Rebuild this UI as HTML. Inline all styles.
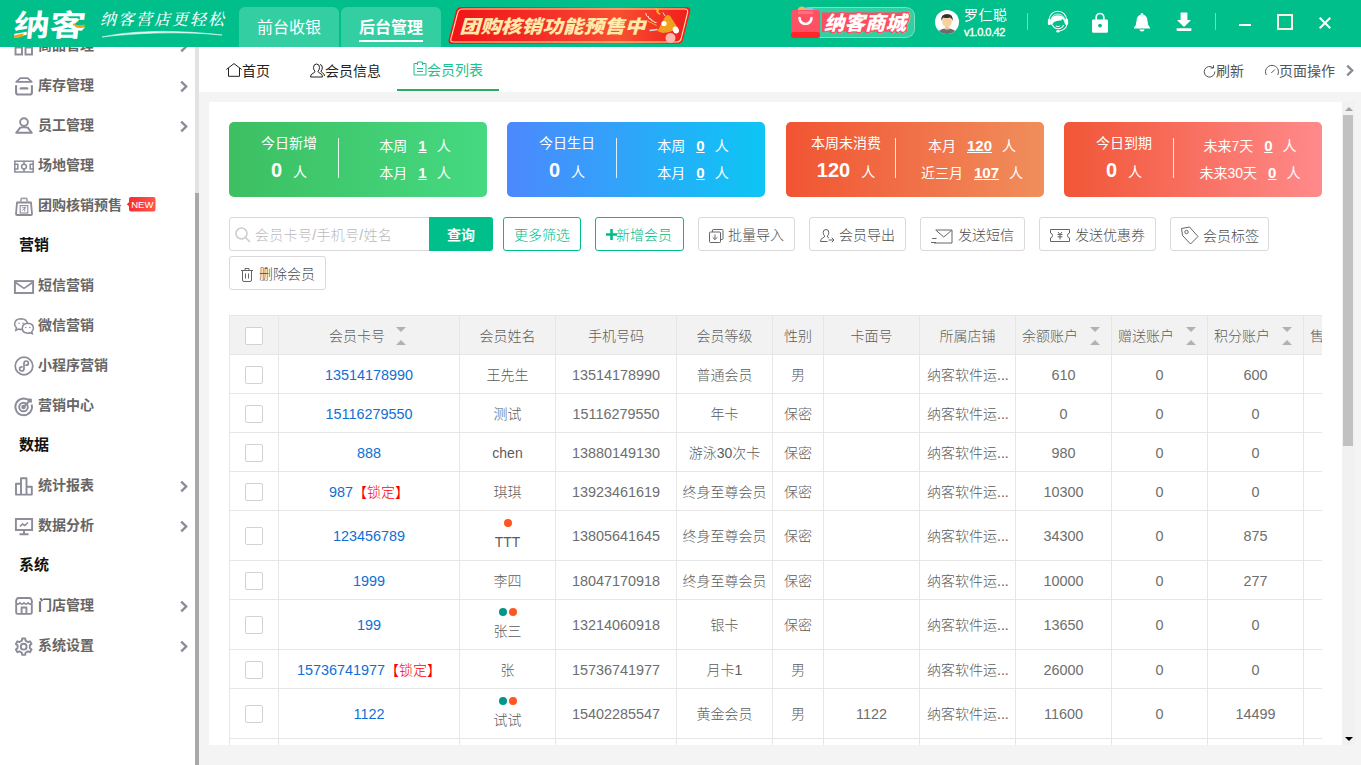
<!DOCTYPE html>
<html lang="zh-CN">
<head>
<meta charset="utf-8">
<title>会员列表</title>
<style>
*{box-sizing:border-box;margin:0;padding:0}
html,body{width:1361px;height:765px;overflow:hidden;background:#f4f4f4}
body{font-family:"Liberation Sans","Noto Sans CJK SC",sans-serif;font-size:14px;color:#5c5c5c;position:relative;font-weight:300}
.abs{position:absolute}
svg{display:block;overflow:visible}
/* top bar */
#top{position:absolute;left:0;top:0;width:1361px;height:47px;background:#00bf8a;z-index:5;font-weight:400}
.ntab{position:absolute;top:7px;height:40px;width:100px;background:#33cfa3;border-radius:6px 6px 0 0;color:#fff;font-size:16px;text-align:center;line-height:42px}
/* sidebar */
#side{position:absolute;left:0;top:46px;width:195px;height:719px;background:#fff;overflow:hidden}
.mi{position:absolute;left:0;width:195px;height:40px}
.mi .t{position:absolute;left:38px;top:0;line-height:40px;font-size:14px;font-weight:700;color:#666;white-space:nowrap}
.mi .ic{position:absolute;left:14px;top:11px;width:20px;height:20px}
.mi .ch{position:absolute;left:180px;top:15.5px;width:8px;height:11px}
.sec{position:absolute;left:19px;font-size:15px;font-weight:700;color:#111;line-height:40px;height:40px}
/* page tabs */
#ptabs{position:absolute;left:199px;top:46px;width:1162px;height:46px;background:#fff}
.pt{position:absolute;top:0;height:46px;line-height:50px;font-size:14px;color:#222;font-weight:400;white-space:nowrap}
/* main card */
#card{position:absolute;left:209px;top:102px;width:1133px;height:643px;background:#fff;overflow:hidden}
.stat{position:absolute;top:20px;width:258px;height:75px;border-radius:5px;color:#fff;font-weight:400}
.stat .l{position:absolute;left:10px;width:100px;text-align:center;white-space:nowrap}
.stat .dv{position:absolute;left:109px;top:16px;width:1px;height:40px;background:rgba(255,255,255,.85)}
.stat .r{position:absolute;left:110px;width:152px;text-align:center;white-space:nowrap;font-size:14px}
.stat b.n{font-size:15px;font-weight:700;text-decoration:underline;margin:0 10px 0 11px}
.stat .big{font-size:20px;font-weight:700;margin-right:11px}
.btn{position:absolute;top:115px;height:34px;border:1px solid #d9d9d9;border-radius:3px;background:#fff;color:#4d4d4d;font-size:14px;line-height:35px;white-space:nowrap}
.btn.g{border-color:#00bf8a;color:#00b985}
.btn .tx{position:absolute;top:0}
/* table */
#tbl{position:absolute;left:20px;top:213px;width:1093px;height:430px;overflow:hidden;border-left:1px solid #e6e6e6;border-top:1px solid #e6e6e6}
.row{position:absolute;left:0;width:1200px;border-bottom:1px solid #e6e6e6}
.c{position:absolute;top:0;height:100%;border-right:1px solid #e6e6e6;text-align:center;white-space:nowrap;overflow:hidden}
.hd{background:#f2f2f2}
.cb{position:absolute;left:15px;width:18px;height:18px;border:1px solid #d2d2d2;border-radius:2px;background:#fff}
a.lk{color:#0f6fd6;text-decoration:none;font-size:14.4px}
.nm{font-size:14.4px;color:#6e6e6e}
.lock{color:#f00;font-size:14px}
.dot{display:inline-block;width:8px;height:8px;border-radius:50%;margin:0 1px;vertical-align:top}
</style>
</head>
<body>
<div id="top"><!-- logo -->
<div class="abs" style="left:14px;top:3px;width:80px;height:40px;font-family:'Noto Sans CJK SC',sans-serif;font-weight:700;font-size:30px;line-height:40px;color:#fff;white-space:nowrap;transform-origin:0 50%;transform:scaleX(1.2) skewX(-5deg);letter-spacing:0">纳客</div>
<svg class="abs" style="left:0;top:0" width="100" height="46" viewBox="0 0 100 46"><path d="M14 35.500 q5 -1.500 10 -2 l-1.500 3 q-5 2 -8.500 1.500z" fill="#f5a01d"/><path d="M73 23 q4 3.500 12 1.500 l-1 3 q-6 1.500 -9 -1z" fill="#f5a01d"/></svg>
<div class="abs" style="left:100px;top:8px;width:130px;height:22px;font-family:'Noto Serif CJK SC',serif;font-style:italic;font-weight:500;font-size:16px;line-height:22px;color:#fff;letter-spacing:2px;white-space:nowrap">纳客营店更轻松</div>
<svg class="abs" style="left:100px;top:30px" width="125" height="8" viewBox="0 0 125 8"><path d="M2 7 C 30 1, 70 -1, 122 5 C 80 1, 35 3, 2 7z" fill="#fff" stroke="#fff" stroke-width=".6" opacity=".9"/></svg>
<!-- nav tabs -->
<div class="ntab" style="left:239px">前台收银</div>
<div class="ntab" style="left:341px;font-weight:700">后台管理</div>
<div class="abs" style="left:359px;top:40px;width:64px;height:2px;background:#fff"></div>
<!-- banner -->
<svg class="abs" style="left:446px;top:5px" width="248" height="41" viewBox="0 0 248 41">
<defs><linearGradient id="bg1" x1="0" x2="1" y1="0" y2="0"><stop offset="0" stop-color="#f01416"/><stop offset=".45" stop-color="#f5332a"/><stop offset=".7" stop-color="#f8502f"/><stop offset="1" stop-color="#f01c1c"/></linearGradient></defs>
<path d="M16 2 H240 Q245.500 2 244 7 L237 35 Q236 39 231 39 H6 Q1.500 39 2.800 34 L10 6 Q11 2 16 2Z" fill="url(#bg1)"/>
<path d="M17 4 H238.500 Q242.500 4 241.500 8 L235.200 33.500 Q234.300 37 230 37 H7.500 Q4 37 5 33.500 L11.800 7.500 Q12.700 4 17 4Z" fill="none" stroke="#ffe3a6" stroke-width="1.100"/>
<text x="13.500" y="27.800" font-family="'Noto Sans CJK SC',sans-serif" font-weight="900" font-style="italic" font-size="18.300" fill="#ffeaa9" textLength="186" lengthAdjust="spacingAndGlyphs">团购核销功能预售中</text>
<!-- megaphone -->
<g>
<circle cx="224.500" cy="33" r="5" fill="#f9b8b2"/>
<path d="M211.500 26 L219 12 Q221.500 8.500 224.500 11.500 L231.500 22.500 Q226 27.500 216.500 28Z" fill="#f0a01c"/>
<ellipse cx="229.800" cy="25" rx="3" ry="3.600" fill="#fff" transform="rotate(-25 229.800 25)"/>
<circle cx="218" cy="18.500" r="2.600" fill="#fff"/>
<path d="M200 8 q0 4 2.500 3.500 q-.5 3 2.500 2.500 q0 2.500 2.500 2 q.5 2 3 1.500" stroke="#fff" stroke-width="1" fill="none" opacity=".9"/>
<path d="M209.500 3.500 l2.500 2.300 l-1 1 l3 2.500" stroke="#ffc61a" stroke-width="1.500" fill="none"/>
<path d="M201.600 16 L210.800 20.500" stroke="#f6b01e" stroke-width="1"/>
<path d="M203.600 25.400 L211.500 24.400" stroke="#cfe3ee" stroke-width="1.500"/>
<path d="M217 7.500 l2 3.500" stroke="#cfe3ee" stroke-width="1"/>
</g>
</svg>
<!-- mall badge -->
<div class="abs" style="left:800px;top:7px;width:115px;height:31px;background:#33cfa3;border:1px solid rgba(255,255,255,.35);border-radius:9px"></div>
<svg class="abs" style="left:789px;top:5px" width="130" height="36" viewBox="0 0 130 36">
<circle cx="13" cy="6" r="4.500" fill="#f6b36b"/><circle cx="20" cy="7.500" r="5.500" fill="#8fc3ea"/>
<rect x="2" y="5" width="29" height="28" rx="3" fill="#ff5163"/>
<rect x="2" y="27" width="29" height="6" rx="2.500" fill="#ff2727"/>
<path d="M9 6 H24 V9 H9z" fill="#ff8a8a" opacity=".6"/>
<path d="M10.500 13 a6 6 0 0 0 12 0" fill="none" stroke="#fff" stroke-width="2.600" stroke-linecap="round"/>
<rect x="33" y="7.500" width="85" height="19" fill="#ff4d60"/><text x="35" y="25" font-family="'Noto Sans CJK SC',sans-serif" font-weight="900" font-style="italic" font-size="19.500" fill="#fff" stroke="#ff4d60" stroke-width="2.500" stroke-linejoin="round" paint-order="stroke" textLength="82" lengthAdjust="spacingAndGlyphs">纳客商城</text>
</svg>
<!-- avatar -->
<svg class="abs" style="left:935px;top:10px" width="24" height="24" viewBox="0 0 24 24">
<defs><clipPath id="avc"><circle cx="12" cy="12" r="12"/></clipPath></defs>
<circle cx="12" cy="12" r="12" fill="#fff"/>
<g clip-path="url(#avc)">
<path d="M2 26 Q2 18.500 12 18.500 Q22 18.500 22 26Z" fill="#6d6d6d"/>
<rect x="10" y="14" width="4" height="5.500" fill="#f3c58f"/>
<ellipse cx="12" cy="11.500" rx="4.800" ry="5.600" fill="#f8d1a0"/>
<path d="M6.400 11 Q5.500 4 12 4 Q18.500 4 17.600 11 Q17 8 15 7.500 Q11 8.500 8.500 7.500 Q7 8.500 6.400 11Z" fill="#333"/>
</g>
</svg>
<div class="abs" style="left:964px;top:6px;font-size:14px;line-height:18px;color:#fff;white-space:nowrap;letter-spacing:.5px">罗仁聪</div>
<div class="abs" style="left:964px;top:25px;font-size:11px;line-height:14px;color:#fff;white-space:nowrap;letter-spacing:-.5px;font-weight:400;-webkit-text-stroke:.35px #fff">v1.0.0.42</div>
<div class="abs" style="left:1027px;top:13px;width:1px;height:17px;background:rgba(255,255,255,.45)"></div>
<!-- headset -->
<svg class="abs" style="left:1047px;top:10px" width="22" height="23" viewBox="0 0 22 23">
<path d="M2.300 9.800 A8.600 8.600 0 0 1 19.500 9.800" fill="none" stroke="#fff" stroke-width="1.100"/>
<path d="M4 9.800 A7 7 0 0 1 17.800 9.800" fill="none" stroke="#fff" stroke-width=".9" opacity=".9"/>
<rect x=".9" y="8.800" width="3" height="6.200" rx="1.300" fill="#fff"/><rect x="18.100" y="8.800" width="3" height="6.200" rx="1.300" fill="#fff"/>
<path d="M4.400 12.600 Q4.400 5.800 10.900 5.800 Q17.400 5.800 17.400 12.600 Q17.400 13.200 17.200 14 Q16.600 10.800 15 9 Q14.200 9.400 13.800 10.600 Q10 10.300 7.600 12 Q6 13.300 5.800 15.200 Q4.400 14.200 4.400 12.600Z" fill="#fff" transform="translate(10.900 11.500) scale(1.130 1.100) translate(-10.900 -11.500)"/>
<path d="M5.300 14.800 Q7.300 18.800 11 18.800 Q14.700 18.800 16.700 15" fill="none" stroke="#fff" stroke-width="1.100"/>
<path d="M8.900 16 Q10.900 17.400 12.900 16" fill="none" stroke="#fff" stroke-width="1"/>
<path d="M19.800 14.500 Q19.300 19.600 12.300 21" fill="none" stroke="#fff" stroke-width="1.100"/>
<ellipse cx="10.900" cy="21.300" rx="1.700" ry="1.200" fill="#fff"/>
</svg>
<!-- lock -->
<svg class="abs" style="left:1092px;top:12px" width="16" height="21" viewBox="0 0 16 21">
<path d="M4.200 8 V5.300 a3.800 3.800 0 0 1 7.600 0 V8" fill="none" stroke="#fff" stroke-width="1.700"/>
<rect x="0" y="7.400" width="16" height="13.300" rx="1.300" fill="#fff"/>
<circle cx="8" cy="13.600" r="1.900" fill="#00bd88"/>
</svg>
<!-- bell -->
<svg class="abs" style="left:1134px;top:12.500px" width="16" height="19" viewBox="0 0 16 19">
<path d="M8 0 a1.300 1.300 0 0 1 1.300 1.500 Q13.300 2.800 13.500 8 Q13.600 12.500 16 14.500 V15.500 H0 V14.500 Q2.400 12.500 2.500 8 Q2.700 2.800 6.700 1.500 A1.300 1.300 0 0 1 8 0Z" fill="#fff"/>
<path d="M5.500 16.600 h5 a2.500 2 0 0 1 -5 0z" fill="#fff"/>
</svg>
<!-- download -->
<svg class="abs" style="left:1176px;top:12px" width="16" height="19" viewBox="0 0 16 19">
<path d="M4.600 0.500 H11.400 V8 H15 L8 15 L1 8 H4.600Z" fill="#fff"/>
<rect x=".5" y="16.300" width="15" height="2.600" rx=".8" fill="#fff"/>
</svg>
<div class="abs" style="left:1215px;top:13px;width:1px;height:17px;background:rgba(255,255,255,.45)"></div>
<!-- window controls -->
<div class="abs" style="left:1239px;top:24px;width:12px;height:2px;background:#fff"></div>
<div class="abs" style="left:1277px;top:14px;width:16px;height:16px;border:2px solid #fbeee1"></div>
<svg class="abs" style="left:1319px;top:17px" width="12" height="12" viewBox="0 0 12 12"><path d="M.7 .7 L11.300 11.300 M11.300 .7 L.7 11.300" stroke="#fff" stroke-width="2"/></svg>
</div>
<div id="side"><!-- y offsets relative to sidebar top (46). item center y(abs)=45 -> top = 45-20-46=-21 -->
<div class="mi" style="top:-21px"><svg class="ic" viewBox="0 0 20 20"><g fill="none" stroke="#8b8b99" stroke-width="1.900"><rect x="1.500" y="1.500" width="6.500" height="6.500"/><rect x="11.500" y="1.500" width="6.500" height="6.500"/><rect x="1.500" y="11.500" width="6.500" height="7"/><rect x="11.500" y="11.500" width="6.500" height="7"/></g></svg><span class="t">商品管理</span><svg class="ch" viewBox="0 0 8 11"><path d="M1.200 .6 L6.200 5.500 L1.200 10.400" fill="none" stroke="#8b8b99" stroke-width="2.400"/></svg></div>
<div class="mi" style="top:19px"><svg class="ic" viewBox="0 0 20 20"><g fill="none" stroke="#8b8b99" stroke-width="2"><path d="M2.100 9.200 V16.400 Q2.100 18.500 4.200 18.500 H15.800 Q17.900 18.500 17.900 16.400 V9.200" stroke-width="2.100"/><path d="M2.300 5.900 L6.300 2.100 H13.700 L17.700 5.900Z" stroke-width="1.900" stroke-linejoin="round"/><path d="M6.800 12.400 H13.200" stroke-width="2.400" stroke-linecap="round"/></g></svg><span class="t">库存管理</span><svg class="ch" viewBox="0 0 8 11"><path d="M1.200 .6 L6.200 5.500 L1.200 10.400" fill="none" stroke="#8b8b99" stroke-width="2.400"/></svg></div>
<div class="mi" style="top:59px"><svg class="ic" viewBox="0 0 20 20"><g fill="none" stroke="#8b8b99" stroke-width="1.900"><circle cx="10" cy="6.100" r="3.900"/><path d="M2.200 16.800 L6.200 11.700 Q10 10.700 13.800 11.700 L17.800 16.800Z" stroke-linejoin="round"/></g></svg><span class="t">员工管理</span><svg class="ch" viewBox="0 0 8 11"><path d="M1.200 .6 L6.200 5.500 L1.200 10.400" fill="none" stroke="#8b8b99" stroke-width="2.400"/></svg></div>
<div class="mi" style="top:99px"><svg class="ic" viewBox="0 0 20 20"><g fill="none" stroke="#8b8b99" stroke-width="1.500"><rect x=".8" y="5.200" width="18.400" height="10.800"/><circle cx="10" cy="10.600" r="2.400"/><path d="M10 5.200 V8.200 M10 13 V16 M.8 8.300 H3.800 V12.900 H.8 M19.200 8.300 H16.200 V12.900 H19.200"/></g></svg><span class="t">场地管理</span></div>
<div class="mi" style="top:139px"><svg class="ic" viewBox="0 0 20 20"><g fill="none" stroke="#8b8b99" stroke-width="1.800"><path d="M3 6.500 H17 L18 18 Q18 19 17 19 H3 Q2 19 2 18Z" stroke-linejoin="round"/><path d="M6.300 6.500 L7.500 2.300 H12.500 L13.700 6.500" stroke="#a5a5b0" stroke-linejoin="round"/><rect x="6.200" y="9.600" width="7.600" height="7.400" stroke-width="1.100"/><path d="M8 11.800 H12.200 M10.700 10.800 V15.500 M8.300 14.700 L10.500 12.500" stroke-width=".9"/></g></svg><span class="t">团购核销预售</span>
<svg class="abs" style="left:126px;top:12px" width="30" height="15" viewBox="0 0 30 15"><defs><linearGradient id="ng" x1="0" x2="1"><stop offset="0" stop-color="#f52a2e"/><stop offset="1" stop-color="#ff5748"/></linearGradient></defs><path d="M0.800 7.300 L3 5.300 V2 Q3 0 5 0 H27.500 Q29.500 0 29.500 2 V12.500 Q29.500 14.500 27.500 14.500 H5 Q3 14.500 3 12.500 V9.300Z" fill="url(#ng)"/><text x="16.300" y="11" text-anchor="middle" font-family="'Liberation Sans',sans-serif" font-size="9.500" fill="#fff">NEW</text></svg></div>
<div class="sec" style="top:179px">营销</div>
<div class="mi" style="top:219px"><svg class="ic" viewBox="0 0 20 20"><g fill="none" stroke="#8b8b99" stroke-width="1.900"><rect x=".9" y="5.100" width="18.200" height="11.900"/><path d="M1.500 6.500 L10 12.300 L18.500 6.500" stroke-width="1.600"/></g></svg><span class="t">短信营销</span></div>
<div class="mi" style="top:259px"><svg class="ic" viewBox="0 0 20 20"><g fill="#fff" stroke="#8b8b99" stroke-width="1.500"><path d="M7 2.800 Q13 3 13.500 8 Q12.500 13.300 7 13.500 Q5.500 13.500 4.300 13 L1.800 14.300 L2.400 11.800 Q.6 10.200 .6 8 Q1 3 7 2.800Z"/><path d="M13.800 7.300 Q19.400 7.600 19.400 12.300 Q19.400 14.400 17.700 15.800 L18.300 17.600 L16.200 16.700 Q15 17.200 13.800 17.200 Q8.300 17 8.300 12.300 Q8.500 7.600 13.800 7.300Z"/></g><g fill="#8b8b99"><circle cx="5" cy="7.300" r=".75"/><circle cx="9" cy="7.300" r=".75"/><circle cx="11.800" cy="11.500" r=".75"/><circle cx="15.800" cy="11.500" r=".75"/></g></svg><span class="t">微信营销</span></div>
<div class="mi" style="top:299px"><svg class="ic" viewBox="0 0 20 20"><g fill="none" stroke="#8b8b99" stroke-width="1.700"><circle cx="10" cy="10" r="8.800"/><path d="M10 12.500 Q10 15 7.800 15 Q5.600 15 5.600 12.800 Q5.600 10.800 8 10.800 M10 12.500 V7.500 Q10 5 12.200 5 Q14.400 5 14.400 7.200 Q14.400 9.200 12 9.200" stroke-linecap="round"/></g></svg><span class="t">小程序营销</span></div>
<div class="mi" style="top:339px"><svg class="ic" viewBox="0 0 20 20"><g fill="none" stroke="#8b8b99" stroke-width="1.900"><path d="M15.500 5 A8.300 8.300 0 1 0 17.600 8.500"/><circle cx="9.500" cy="11" r="4.300"/><circle cx="9.500" cy="11" r="1.300" fill="#8b8b99"/><path d="M9.500 11 L17.500 3 M15 2.500 V5.500 H18"/></g></svg><span class="t">营销中心</span></div>
<div class="sec" style="top:379px">数据</div>
<div class="mi" style="top:419px"><svg class="ic" viewBox="0 0 20 20"><g fill="none" stroke="#8b8b99" stroke-width="1.900" stroke-linejoin="round"><path d="M2 7.700 H7 V18.600 H2Z M7 2.300 H12.500 V18.600 H7Z M12.500 10.700 H17.800 V18.600 H12.500Z"/></g></svg><span class="t">统计报表</span><svg class="ch" viewBox="0 0 8 11"><path d="M1.200 .6 L6.200 5.500 L1.200 10.400" fill="none" stroke="#8b8b99" stroke-width="2.400"/></svg></div>
<div class="mi" style="top:459px"><svg class="ic" viewBox="0 0 20 20"><g fill="none" stroke="#8b8b99" stroke-width="1.900"><rect x="1.900" y="3" width="16.200" height="11"/><path d="M10 14 V18 M5.500 18.200 H14.500"/><path d="M6 10.500 L8.500 8 L10.800 9.500 L14 6.500" stroke-width="1.500"/></g></svg><span class="t">数据分析</span><svg class="ch" viewBox="0 0 8 11"><path d="M1.200 .6 L6.200 5.500 L1.200 10.400" fill="none" stroke="#8b8b99" stroke-width="2.400"/></svg></div>
<div class="sec" style="top:499px">系统</div>
<div class="mi" style="top:539px"><svg class="ic" viewBox="0 0 20 20"><g fill="none" stroke="#8b8b99" stroke-width="1.900" stroke-linejoin="round"><path d="M2.200 7.500 V16.500 Q2.200 17.900 3.600 17.900 H16.400 Q17.800 17.900 17.800 16.500 V7.500"/><path d="M2 7 Q2 2 4.800 2 H15.200 Q18 2 18 7"/><path d="M2 6.500 Q4 9.600 6 6.800 Q8 9.600 10 6.800 Q12 9.600 14 6.800 Q16 9.600 18 6.500" stroke-width="1.600"/><path d="M7.600 17.800 V11.500 H12.400 V17.800"/></g></svg><span class="t">门店管理</span><svg class="ch" viewBox="0 0 8 11"><path d="M1.200 .6 L6.200 5.500 L1.200 10.400" fill="none" stroke="#8b8b99" stroke-width="2.400"/></svg></div>
<div class="mi" style="top:579px"><svg class="ic" viewBox="0 0 20 20"><g fill="none" stroke="#8b8b99" stroke-width="1.900" stroke-linejoin="round"><path d="M11.28 2.55 L8.12 2.55 L7.86 4.68 L5.40 6.09 L3.44 5.25 L1.85 8.00 L3.56 9.28 L3.56 12.12 L1.85 13.40 L3.44 16.15 L5.40 15.31 L7.86 16.72 L8.12 18.85 L11.28 18.85 L11.54 16.72 L14.00 15.31 L15.96 16.15 L17.55 13.40 L15.84 12.12 L15.84 9.28 L17.55 8.00 L15.96 5.25 L14.00 6.09 L11.54 4.68Z"/><circle cx="9.7" cy="10.7" r="2.900"/></g></svg><span class="t">系统设置</span><svg class="ch" viewBox="0 0 8 11"><path d="M1.200 .6 L6.200 5.500 L1.200 10.400" fill="none" stroke="#8b8b99" stroke-width="2.400"/></svg></div>
</div>
<div class="abs" style="left:195px;top:46px;width:4px;height:719px;background:#e2e2e2"></div>
<div class="abs" style="left:195px;top:193px;width:4px;height:572px;background:#a9a9a9"></div>
<div id="ptabs"><!-- coordinates relative to #ptabs (left 199, top 46) -->
<svg class="abs" style="left:27px;top:17px" width="16" height="14" viewBox="0 0 16 14"><path d="M.3 6.500 L8 .6 L15.700 6.500 M2.500 5 V13.300 H13.500 V5" fill="none" stroke="#222" stroke-width="1"/></svg>
<div class="pt" style="left:43px">首页</div>
<svg class="abs" style="left:111px;top:17px" width="15" height="15" viewBox="0 0 15 15"><g fill="none" stroke="#222" stroke-width="1"><path d="M6.500 1 Q9.500 1 9.500 4.500 Q9.500 7 8 8.200 Q8 9.500 10 10.300 Q12.500 11.200 12.500 14 H.5 Q.5 11.200 3 10.300 Q5 9.500 5 8.200 Q3.500 7 3.500 4.500 Q3.500 1 6.500 1Z"/><path d="M10 1.500 Q12.500 1.800 12.300 5 Q12.200 7 11 8 Q11 9.300 12.700 10 Q14.500 10.800 14.500 13"/></g></svg>
<div class="pt" style="left:126px">会员信息</div>
<svg class="abs" style="left:214px;top:15px" width="14" height="15" viewBox="0 0 14 15"><g fill="none" stroke="#1cc18c" stroke-width="1"><path d="M4.500 2.500 H1 V14 H13 V2.500 H9.500"/><path d="M4.500 4 V1 H9.500 V4"/><path d="M4 7.500 H10 M4 10.500 H10"/></g></svg>
<div class="pt" style="left:228px;color:#1cc18c;line-height:48px">会员列表</div>
<div class="abs" style="left:198px;top:43px;width:102px;height:2px;background:#27ae60"></div>
<svg class="abs" style="left:1004px;top:19px" width="13" height="13" viewBox="0 0 13 13"><g fill="none" stroke="#555" stroke-width="1"><path d="M10 2.800 A5.300 5.300 0 1 0 11.800 6.500"/><path d="M7.500 3 H10.500 V.2"/></g></svg>
<div class="pt" style="left:1017px;color:#555">刷新</div>
<svg class="abs" style="left:1066px;top:19px" width="14" height="11" viewBox="0 0 14 11"><g fill="none" stroke="#555" stroke-width="1"><path d="M1.300 10 A6.500 6.500 0 1 1 12.700 10"/><path d="M6.300 8 L9.800 4.500"/></g></svg>
<div class="pt" style="left:1080px;color:#555">页面操作</div>
<svg class="abs" style="left:1147px;top:19px" width="8" height="11" viewBox="0 0 8 11"><path d="M1.200 .6 L6.200 5.500 L1.200 10.400" fill="none" stroke="#8b8b99" stroke-width="2.400"/></svg>
</div>
<div id="card"><!--CARDSTART--><div class="stat" style="left:20px;background:linear-gradient(90deg,#3dbf62,#45d981)">
<div class="l" style="top:11px;line-height:20px;font-size:14px">今日新增</div>
<div class="l" style="top:35px;line-height:26px;font-size:14px"><span class="big">0</span>人</div>
<div class="dv"></div>
<div class="r" style="top:13px;line-height:22px">本周<b class="n">1</b>人</div>
<div class="r" style="top:40px;line-height:22px">本月<b class="n">1</b>人</div>
</div>
<div class="stat" style="left:298px;background:linear-gradient(90deg,#4d88fe,#0cc6f4)">
<div class="l" style="top:11px;line-height:20px;font-size:14px">今日生日</div>
<div class="l" style="top:35px;line-height:26px;font-size:14px"><span class="big">0</span>人</div>
<div class="dv"></div>
<div class="r" style="top:13px;line-height:22px">本周<b class="n">0</b>人</div>
<div class="r" style="top:40px;line-height:22px">本月<b class="n">0</b>人</div>
</div>
<div class="stat" style="left:577px;background:linear-gradient(90deg,#f15433,#f08e5c)">
<div class="l" style="top:11px;line-height:20px;font-size:14px">本周未消费</div>
<div class="l" style="top:35px;line-height:26px;font-size:14px"><span class="big">120</span>人</div>
<div class="dv"></div>
<div class="r" style="top:13px;line-height:22px">本月<b class="n">120</b>人</div>
<div class="r" style="top:40px;line-height:22px">近三月<b class="n">107</b>人</div>
</div>
<div class="stat" style="left:855px;background:linear-gradient(90deg,#f15636,#ff8a8b)">
<div class="l" style="top:11px;line-height:20px;font-size:14px">今日到期</div>
<div class="l" style="top:35px;line-height:26px;font-size:14px"><span class="big">0</span>人</div>
<div class="dv"></div>
<div class="r" style="top:13px;line-height:22px">未来7天<b class="n">0</b>人</div>
<div class="r" style="top:40px;line-height:22px">未来30天<b class="n">0</b>人</div>
</div>
<div class="btn" style="left:20px;width:201px;border-radius:3px 0 0 3px;color:#bbb"><svg class="abs" style="left:5px;top:9px" width="16" height="16" viewBox="0 0 16 16"><g fill="none" stroke="#ccc" stroke-width="1.500"><circle cx="6.500" cy="6.500" r="5.500"/><path d="M10.500 10.500 L15 15"/></g></svg><span class="tx" style="left:25px;letter-spacing:.3px">会员卡号/手机号/姓名</span></div>
<div class="btn" style="left:220px;width:64px;border:0;background:#00bf8a;color:#fff;font-weight:700;border-radius:0 3px 3px 0;text-align:center;line-height:37px">查询</div>
<div class="btn g" style="left:294px;width:78px;text-align:center">更多筛选</div>
<div class="btn g" style="left:386px;width:89px"><svg class="abs" style="left:10px;top:11px" width="11" height="11" viewBox="0 0 11 11"><path d="M5.500 0 V11 M0 5.500 H11" stroke="#00bd88" stroke-width="2.600"/></svg><span class="tx" style="left:20px">新增会员</span></div>
<div class="btn" style="left:489px;width:97px"><svg class="abs" style="left:10px;top:11px" width="15" height="14" viewBox="0 0 15 14"><g fill="none" stroke="#666" stroke-width="1"><path d="M3.500 3 V1.200 Q3.500 .5 4.200 .5 H13.300 Q14 .5 14 1.200 V9.800 Q14 10.500 13.300 10.500 H11.500"/><rect x=".5" y="3" width="11" height="10.500" rx=".8"/><path d="M6 5.500 V10.500 M3.700 8.300 L6 10.600 L8.300 8.300"/></g></svg><span class="tx" style="left:29px">批量导入</span></div>
<div class="btn" style="left:600px;width:97px"><svg class="abs" style="left:10px;top:11px" width="15" height="14" viewBox="0 0 15 14"><g fill="none" stroke="#666" stroke-width="1"><path d="M6 .5 Q8.800 .5 8.800 3.500 Q8.800 6 7.300 7 Q7.300 8.300 9 9 M6 .5 Q3.200 .5 3.200 3.500 Q3.200 6 4.700 7 Q4.700 8.300 2.800 9 Q.5 9.800 .5 12.500 H7.500"/><path d="M8.500 11 H14 M11.800 8.800 L14 11 L11.800 13.200"/></g></svg><span class="tx" style="left:29px">会员导出</span></div>
<div class="btn" style="left:711px;width:105px"><svg class="abs" style="left:10px;top:11px" width="22" height="15" viewBox="0 0 22 15"><g fill="none" stroke="#666" stroke-width="1"><path d="M4.500 1 H21 V14 H3"/><path d="M5 1.300 L12.800 8 L20.700 1.300"/><path d="M0 13.500 H5 M1.200 9.500 H5.500"/></g></svg><span class="tx" style="left:37px">发送短信</span></div>
<div class="btn" style="left:830px;width:117px"><svg class="abs" style="left:10px;top:11px" width="20" height="13" viewBox="0 0 20 13"><g fill="none" stroke="#666" stroke-width="1"><path d="M.5 .5 H19.500 V4 Q17.500 4.500 17.500 6.500 Q17.500 8.500 19.500 9 V12.500 H.5 V9 Q2.500 8.500 2.500 6.500 Q2.500 4.500 .5 4Z"/><path d="M8 3 L10 5.500 L12 3 M7.500 5.500 H12.500 M7.500 7.800 H12.500 M10 5.500 V10.500"/></g></svg><span class="tx" style="left:35px">发送优惠券</span></div>
<div class="btn" style="left:961px;width:99px"><svg class="abs" style="left:9px;top:8px" width="19" height="19" viewBox="0 0 19 19"><g fill="none" stroke="#666" stroke-width="1"><path d="M1.500 2.500 L9.500 1 L18 10.500 L10.500 18 L2.500 9.500Z" stroke-linejoin="round"/><circle cx="6.500" cy="6" r="1.700"/></g></svg><span class="tx" style="left:32px;top:1px">会员标签</span></div>
<div class="btn" style="left:20px;top:154px;width:97px"><svg class="abs" style="left:11px;top:11px" width="12" height="14" viewBox="0 0 12 14"><g fill="none" stroke="#666" stroke-width="1"><path d="M0 2.500 H12 M4 2.500 V.5 H8 V2.500 M1.500 2.500 V12 Q1.500 13.500 3 13.500 H9 Q10.500 13.500 10.500 12 V2.500 M4.500 5.500 V10.500 M7.500 5.500 V10.500"/></g></svg><span class="tx" style="left:29px">删除会员</span></div>
<div id="tbl">
<div class="row hd" style="top:0;height:39px;line-height:40px">
<div class="c" style="left:0px;width:49px"><span class="cb" style="top:11px"></span></div>
<div class="c" style="left:49px;width:181px;text-align:left"><span class="abs" style="left:50px">会员卡号</span><svg class="abs" style="left:117px;top:11px" width="10" height="18" viewBox="0 0 10 18"><path d="M0 0 H10 L5 5Z M0 18 H10 L5 13Z" fill="#b2b2b2"/></svg></div>
<div class="c" style="left:230px;width:96px">会员姓名</div>
<div class="c" style="left:326px;width:121px">手机号码</div>
<div class="c" style="left:447px;width:96px">会员等级</div>
<div class="c" style="left:543px;width:51px">性别</div>
<div class="c" style="left:594px;width:96px">卡面号</div>
<div class="c" style="left:690px;width:96px">所属店铺</div>
<div class="c" style="left:786px;width:96px;text-align:left"><span class="abs" style="left:6px">余额账户</span><svg class="abs" style="left:74px;top:11px" width="10" height="18" viewBox="0 0 10 18"><path d="M0 0 H10 L5 5Z M0 18 H10 L5 13Z" fill="#b2b2b2"/></svg></div>
<div class="c" style="left:882px;width:96px;text-align:left"><span class="abs" style="left:6px">赠送账户</span><svg class="abs" style="left:74px;top:11px" width="10" height="18" viewBox="0 0 10 18"><path d="M0 0 H10 L5 5Z M0 18 H10 L5 13Z" fill="#b2b2b2"/></svg></div>
<div class="c" style="left:978px;width:96px;text-align:left"><span class="abs" style="left:6px">积分账户</span><svg class="abs" style="left:74px;top:11px" width="10" height="18" viewBox="0 0 10 18"><path d="M0 0 H10 L5 5Z M0 18 H10 L5 13Z" fill="#b2b2b2"/></svg></div>
<div class="c" style="left:1074px;width:96px;text-align:left"><span class="abs" style="left:6px">售后</span></div>
</div>
<div class="row" style="top:39px;height:39px;line-height:40px">
<div class="c" style="left:0;width:49px"><span class="cb" style="top:11px"></span></div>
<div class="c" style="left:49px;width:181px"><a class="lk">13514178990</a></div>
<div class="c" style="left:230px;width:96px">王先生</div>
<div class="c nm" style="left:326px;width:121px">13514178990</div>
<div class="c" style="left:447px;width:96px">普通会员</div>
<div class="c" style="left:543px;width:51px">男</div>
<div class="c" style="left:594px;width:96px"></div>
<div class="c" style="left:690px;width:96px;text-align:left;padding:0 0 0 7px">纳客软件运...</div>
<div class="c nm" style="left:786px;width:96px">610</div>
<div class="c nm" style="left:882px;width:96px">0</div>
<div class="c nm" style="left:978px;width:96px">600</div>
<div class="c" style="left:1074px;width:96px"></div>
</div>
<div class="row" style="top:78px;height:39px;line-height:40px">
<div class="c" style="left:0;width:49px"><span class="cb" style="top:11px"></span></div>
<div class="c" style="left:49px;width:181px"><a class="lk">15116279550</a></div>
<div class="c" style="left:230px;width:96px">测试</div>
<div class="c nm" style="left:326px;width:121px">15116279550</div>
<div class="c" style="left:447px;width:96px">年卡</div>
<div class="c" style="left:543px;width:51px">保密</div>
<div class="c" style="left:594px;width:96px"></div>
<div class="c" style="left:690px;width:96px;text-align:left;padding:0 0 0 7px">纳客软件运...</div>
<div class="c nm" style="left:786px;width:96px">0</div>
<div class="c nm" style="left:882px;width:96px">0</div>
<div class="c nm" style="left:978px;width:96px">0</div>
<div class="c" style="left:1074px;width:96px"></div>
</div>
<div class="row" style="top:117px;height:39px;line-height:40px">
<div class="c" style="left:0;width:49px"><span class="cb" style="top:11px"></span></div>
<div class="c" style="left:49px;width:181px"><a class="lk">888</a></div>
<div class="c" style="left:230px;width:96px">chen</div>
<div class="c nm" style="left:326px;width:121px">13880149130</div>
<div class="c" style="left:447px;width:96px">游泳30次卡</div>
<div class="c" style="left:543px;width:51px">保密</div>
<div class="c" style="left:594px;width:96px"></div>
<div class="c" style="left:690px;width:96px;text-align:left;padding:0 0 0 7px">纳客软件运...</div>
<div class="c nm" style="left:786px;width:96px">980</div>
<div class="c nm" style="left:882px;width:96px">0</div>
<div class="c nm" style="left:978px;width:96px">0</div>
<div class="c" style="left:1074px;width:96px"></div>
</div>
<div class="row" style="top:156px;height:39px;line-height:40px">
<div class="c" style="left:0;width:49px"><span class="cb" style="top:11px"></span></div>
<div class="c" style="left:49px;width:181px"><a class="lk">987</a><span class="lock">【锁定】</span></div>
<div class="c" style="left:230px;width:96px">琪琪</div>
<div class="c nm" style="left:326px;width:121px">13923461619</div>
<div class="c" style="left:447px;width:96px">终身至尊会员</div>
<div class="c" style="left:543px;width:51px">保密</div>
<div class="c" style="left:594px;width:96px"></div>
<div class="c" style="left:690px;width:96px;text-align:left;padding:0 0 0 7px">纳客软件运...</div>
<div class="c nm" style="left:786px;width:96px">10300</div>
<div class="c nm" style="left:882px;width:96px">0</div>
<div class="c nm" style="left:978px;width:96px">0</div>
<div class="c" style="left:1074px;width:96px"></div>
</div>
<div class="row" style="top:195px;height:50px;line-height:51px">
<div class="c" style="left:0;width:49px"><span class="cb" style="top:16px"></span></div>
<div class="c" style="left:49px;width:181px"><a class="lk">123456789</a></div>
<div class="c" style="left:230px;width:96px;line-height:normal"><div style="height:8px;margin-top:8px;line-height:8px;font-size:0"><span class="dot" style="background:#ff5722"></span></div><div style="line-height:20px;margin-top:5px">TTT</div></div>
<div class="c nm" style="left:326px;width:121px">13805641645</div>
<div class="c" style="left:447px;width:96px">终身至尊会员</div>
<div class="c" style="left:543px;width:51px">保密</div>
<div class="c" style="left:594px;width:96px"></div>
<div class="c" style="left:690px;width:96px;text-align:left;padding:0 0 0 7px">纳客软件运...</div>
<div class="c nm" style="left:786px;width:96px">34300</div>
<div class="c nm" style="left:882px;width:96px">0</div>
<div class="c nm" style="left:978px;width:96px">875</div>
<div class="c" style="left:1074px;width:96px"></div>
</div>
<div class="row" style="top:245px;height:39px;line-height:40px">
<div class="c" style="left:0;width:49px"><span class="cb" style="top:11px"></span></div>
<div class="c" style="left:49px;width:181px"><a class="lk">1999</a></div>
<div class="c" style="left:230px;width:96px">李四</div>
<div class="c nm" style="left:326px;width:121px">18047170918</div>
<div class="c" style="left:447px;width:96px">终身至尊会员</div>
<div class="c" style="left:543px;width:51px">保密</div>
<div class="c" style="left:594px;width:96px"></div>
<div class="c" style="left:690px;width:96px;text-align:left;padding:0 0 0 7px">纳客软件运...</div>
<div class="c nm" style="left:786px;width:96px">10000</div>
<div class="c nm" style="left:882px;width:96px">0</div>
<div class="c nm" style="left:978px;width:96px">277</div>
<div class="c" style="left:1074px;width:96px"></div>
</div>
<div class="row" style="top:284px;height:50px;line-height:51px">
<div class="c" style="left:0;width:49px"><span class="cb" style="top:16px"></span></div>
<div class="c" style="left:49px;width:181px"><a class="lk">199</a></div>
<div class="c" style="left:230px;width:96px;line-height:normal"><div style="height:8px;margin-top:8px;line-height:8px;font-size:0"><span class="dot" style="background:#009688"></span><span class="dot" style="background:#ff5722"></span></div><div style="line-height:20px;margin-top:5px">张三</div></div>
<div class="c nm" style="left:326px;width:121px">13214060918</div>
<div class="c" style="left:447px;width:96px">银卡</div>
<div class="c" style="left:543px;width:51px">保密</div>
<div class="c" style="left:594px;width:96px"></div>
<div class="c" style="left:690px;width:96px;text-align:left;padding:0 0 0 7px">纳客软件运...</div>
<div class="c nm" style="left:786px;width:96px">13650</div>
<div class="c nm" style="left:882px;width:96px">0</div>
<div class="c nm" style="left:978px;width:96px">0</div>
<div class="c" style="left:1074px;width:96px"></div>
</div>
<div class="row" style="top:334px;height:39px;line-height:40px">
<div class="c" style="left:0;width:49px"><span class="cb" style="top:11px"></span></div>
<div class="c" style="left:49px;width:181px"><a class="lk">15736741977</a><span class="lock">【锁定】</span></div>
<div class="c" style="left:230px;width:96px">张</div>
<div class="c nm" style="left:326px;width:121px">15736741977</div>
<div class="c" style="left:447px;width:96px">月卡1</div>
<div class="c" style="left:543px;width:51px">男</div>
<div class="c" style="left:594px;width:96px"></div>
<div class="c" style="left:690px;width:96px;text-align:left;padding:0 0 0 7px">纳客软件运...</div>
<div class="c nm" style="left:786px;width:96px">26000</div>
<div class="c nm" style="left:882px;width:96px">0</div>
<div class="c nm" style="left:978px;width:96px">0</div>
<div class="c" style="left:1074px;width:96px"></div>
</div>
<div class="row" style="top:373px;height:50px;line-height:51px">
<div class="c" style="left:0;width:49px"><span class="cb" style="top:16px"></span></div>
<div class="c" style="left:49px;width:181px"><a class="lk">1122</a></div>
<div class="c" style="left:230px;width:96px;line-height:normal"><div style="height:8px;margin-top:8px;line-height:8px;font-size:0"><span class="dot" style="background:#009688"></span><span class="dot" style="background:#ff5722"></span></div><div style="line-height:20px;margin-top:5px">试试</div></div>
<div class="c nm" style="left:326px;width:121px">15402285547</div>
<div class="c" style="left:447px;width:96px">黄金会员</div>
<div class="c" style="left:543px;width:51px">男</div>
<div class="c nm" style="left:594px;width:96px">1122</div>
<div class="c" style="left:690px;width:96px;text-align:left;padding:0 0 0 7px">纳客软件运...</div>
<div class="c nm" style="left:786px;width:96px">11600</div>
<div class="c nm" style="left:882px;width:96px">0</div>
<div class="c nm" style="left:978px;width:96px">14499</div>
<div class="c" style="left:1074px;width:96px"></div>
</div>
<div class="row" style="top:423px;height:39px;line-height:40px">
<div class="c" style="left:0;width:49px"><span class="cb" style="top:11px"></span></div>
<div class="c" style="left:49px;width:181px"><a class="lk"></a></div>
<div class="c" style="left:230px;width:96px"></div>
<div class="c" style="left:326px;width:121px"></div>
<div class="c" style="left:447px;width:96px"></div>
<div class="c" style="left:543px;width:51px"></div>
<div class="c" style="left:594px;width:96px"></div>
<div class="c" style="left:690px;width:96px;text-align:left;padding:0 0 0 7px"></div>
<div class="c nm" style="left:786px;width:96px"></div>
<div class="c nm" style="left:882px;width:96px"></div>
<div class="c nm" style="left:978px;width:96px"></div>
<div class="c" style="left:1074px;width:96px"></div>
</div>
</div><!--CARDEND--></div>
<!-- main scrollbar -->
<div class="abs" style="left:1342px;top:102px;width:13px;height:643px;background:#f1f1f1"></div>
<div class="abs" style="left:1343px;top:115px;width:10px;height:331px;background:#c1c1c1"></div>
<svg class="abs" style="left:1345px;top:107px" width="8" height="4" viewBox="0 0 8 4"><path d="M0 4 L4 0 L8 4Z" fill="#a3a3a3"/></svg>
<svg class="abs" style="left:1345px;top:737px" width="8" height="4" viewBox="0 0 8 4"><path d="M0 0 L4 4 L8 0Z" fill="#000"/></svg>
</body>
</html>
